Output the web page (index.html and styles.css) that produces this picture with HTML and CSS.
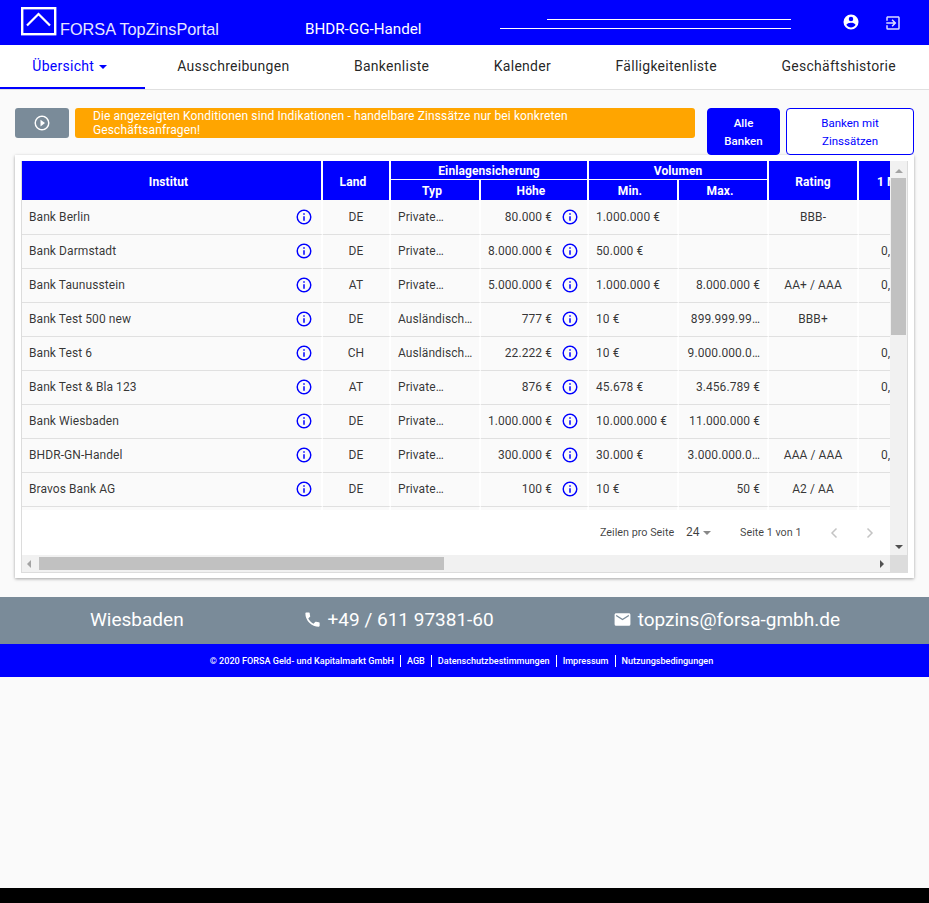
FILE: index.html
```html
<!DOCTYPE html>
<html lang="de">
<head>
<meta charset="utf-8">
<title>FORSA TopZinsPortal</title>
<link rel="stylesheet" href="styles.css">
</head>
<body>
<div class="app">
  <header class="topbar">
    <svg class="logo" width="36" height="29" viewBox="0 0 36 29"><rect x="1.2" y="1.2" width="33" height="26" fill="none" stroke="#fff" stroke-width="2.4"/><path d="M6 18.5 L17.5 7 L29 18.5" fill="none" stroke="#fff" stroke-width="2.2"/></svg>
    <span class="brand">FORSA TopZinsPortal</span>
    <span class="bank">BHDR-GG-Handel</span>
    <div class="fields"><i class="line short"></i><i class="line long"></i></div>
    <svg class="ico-user" width="18" height="18" viewBox="0 0 24 24"><path fill="#fff" d="M12,19.2C9.5,19.2 7.29,17.92 6,16C6.03,14 10,12.9 12,12.9C14,12.9 17.97,14 18,16C16.71,17.92 14.5,19.2 12,19.2M12,5A3,3 0 0,1 15,8A3,3 0 0,1 12,11A3,3 0 0,1 9,8A3,3 0 0,1 12,5M12,2A10,10 0 0,0 2,12A10,10 0 0,0 12,22A10,10 0 0,0 22,12C22,6.47 17.5,2 12,2Z"/></svg>
    <svg class="ico-exit" width="18" height="18" viewBox="0 0 24 24"><path fill="#dcdcff" d="M19,3H5C3.89,3 3,3.89 3,5V9H5V5H19V19H5V15H3V19A2,2 0 0,0 5,21H19A2,2 0 0,0 21,19V5C21,3.89 20.1,3 19,3M10.08,15.58L11.5,17L16.5,12L11.5,7L10.08,8.41L12.67,11H3V13H12.67L10.08,15.58Z"/></svg>
  </header>

  <nav class="tabs">
    <a class="tab active">Übersicht <b class="caret"></b></a>
    <a class="tab">Ausschreibungen</a>
    <a class="tab">Bankenliste</a>
    <a class="tab">Kalender</a>
    <a class="tab">Fälligkeitenliste</a>
    <a class="tab">Geschäftshistorie</a>
  </nav>

  <main class="content">
    <section class="toolbar">
      <button class="play"><svg width="18" height="18" viewBox="0 0 24 24"><path fill="#fff" d="M10,16.5L16,12L10,7.5V16.5M12,20C7.59,20 4,16.41 4,12C4,7.59 7.59,4 12,4C16.41,4 20,7.59 20,12C20,16.41 16.41,20 12,20M12,2A10,10 0 0,0 2,12A10,10 0 0,0 12,22A10,10 0 0,0 22,12A10,10 0 0,0 12,2Z"/></svg></button>
      <div class="notice">Die angezeigten Konditionen sind Indikationen - handelbare Zinssätze nur bei konkreten Geschäftsanfragen!</div>
      <button class="btn solid">Alle<br>Banken</button>
      <button class="btn outline">Banken mit<br>Zinssätzen</button>
    </section>

    <section class="card">
      <div class="grid">
        <div class="viewport">
          <div class="clip">
            <table class="data">
              <colgroup><col class="c1"><col class="c2"><col class="c3"><col class="c4"><col class="c5"><col class="c6"><col class="c7"><col class="c8"></colgroup>
              <thead>
                <tr class="h1"><th rowspan="2" class="sort tall">Institut</th><th rowspan="2" class="sort tall">Land</th><th colspan="2" class="group">Einlagensicherung</th><th colspan="2" class="group">Volumen</th><th rowspan="2" class="tall">Rating</th><th rowspan="2" class="m1 tall">1 Monat</th></tr>
                <tr class="h2"><th class="sort">Typ</th><th class="sort">Höhe</th><th class="sort">Min.</th><th class="sort">Max.</th></tr>
              </thead>
              <tbody>
                <tr class="first"><td><div class="namecell"><span>Bank Berlin</span><svg class="info" viewBox="0 0 24 24"><use href="#i"/></svg></div></td><td class="ctr">DE</td><td>Private…</td><td><div class="amount"><span>80.000 €</span><svg class="info" viewBox="0 0 24 24"><use href="#i"/></svg></div></td><td>1.000.000 €</td><td class="rgt"></td><td class="ctr">BBB-</td><td class="m1"></td></tr>
                <tr><td><div class="namecell"><span>Bank Darmstadt</span><svg class="info" viewBox="0 0 24 24"><use href="#i"/></svg></div></td><td class="ctr">DE</td><td>Private…</td><td><div class="amount"><span>8.000.000 €</span><svg class="info" viewBox="0 0 24 24"><use href="#i"/></svg></div></td><td>50.000 €</td><td class="rgt"></td><td class="ctr"></td><td class="m1">0,50 %</td></tr>
                <tr><td><div class="namecell"><span>Bank Taunusstein</span><svg class="info" viewBox="0 0 24 24"><use href="#i"/></svg></div></td><td class="ctr">AT</td><td>Private…</td><td><div class="amount"><span>5.000.000 €</span><svg class="info" viewBox="0 0 24 24"><use href="#i"/></svg></div></td><td>1.000.000 €</td><td class="rgt">8.000.000 €</td><td class="ctr">AA+ / AAA</td><td class="m1">0,50 %</td></tr>
                <tr><td><div class="namecell"><span>Bank Test 500 new</span><svg class="info" viewBox="0 0 24 24"><use href="#i"/></svg></div></td><td class="ctr">DE</td><td>Ausländisch…</td><td><div class="amount"><span>777 €</span><svg class="info" viewBox="0 0 24 24"><use href="#i"/></svg></div></td><td>10 €</td><td class="rgt">899.999.99…</td><td class="ctr">BBB+</td><td class="m1"></td></tr>
                <tr><td><div class="namecell"><span>Bank Test 6</span><svg class="info" viewBox="0 0 24 24"><use href="#i"/></svg></div></td><td class="ctr">CH</td><td>Ausländisch…</td><td><div class="amount"><span>22.222 €</span><svg class="info" viewBox="0 0 24 24"><use href="#i"/></svg></div></td><td>10 €</td><td class="rgt">9.000.000.0…</td><td class="ctr"></td><td class="m1">0,50 %</td></tr>
                <tr><td><div class="namecell"><span>Bank Test &amp; Bla 123</span><svg class="info" viewBox="0 0 24 24"><use href="#i"/></svg></div></td><td class="ctr">AT</td><td>Private…</td><td><div class="amount"><span>876 €</span><svg class="info" viewBox="0 0 24 24"><use href="#i"/></svg></div></td><td>45.678 €</td><td class="rgt">3.456.789 €</td><td class="ctr"></td><td class="m1">0,50 %</td></tr>
                <tr><td><div class="namecell"><span>Bank Wiesbaden</span><svg class="info" viewBox="0 0 24 24"><use href="#i"/></svg></div></td><td class="ctr">DE</td><td>Private…</td><td><div class="amount"><span>1.000.000 €</span><svg class="info" viewBox="0 0 24 24"><use href="#i"/></svg></div></td><td>10.000.000 €</td><td class="rgt">11.000.000 €</td><td class="ctr"></td><td class="m1"></td></tr>
                <tr><td><div class="namecell"><span>BHDR-GN-Handel</span><svg class="info" viewBox="0 0 24 24"><use href="#i"/></svg></div></td><td class="ctr">DE</td><td>Private…</td><td><div class="amount"><span>300.000 €</span><svg class="info" viewBox="0 0 24 24"><use href="#i"/></svg></div></td><td>30.000 €</td><td class="rgt">3.000.000.0…</td><td class="ctr">AAA / AAA</td><td class="m1">0,50 %</td></tr>
                <tr><td><div class="namecell"><span>Bravos Bank AG</span><svg class="info" viewBox="0 0 24 24"><use href="#i"/></svg></div></td><td class="ctr">DE</td><td>Private…</td><td><div class="amount"><span>100 €</span><svg class="info" viewBox="0 0 24 24"><use href="#i"/></svg></div></td><td>10 €</td><td class="rgt">50 €</td><td class="ctr">A2 / AA</td><td class="m1"></td></tr>
                <tr><td></td><td></td><td></td><td></td><td></td><td></td><td></td><td class="m1"></td></tr>
              </tbody>
            </table>
          </div>
          <div class="pager">
            <span class="pg-label">Zeilen pro Seite</span>
            <span class="pg-num">24</span><b class="pg-caret"></b>
            <span class="pg-range">Seite 1 von 1</span>
            <svg class="chev" width="8" height="12" viewBox="0 0 8 12"><path d="M6.5 1.5 L2 6 L6.5 10.5" fill="none" stroke="#c4c4c4" stroke-width="1.5"/></svg>
            <svg class="chev next" width="8" height="12" viewBox="0 0 8 12"><path d="M1.5 1.5 L6 6 L1.5 10.5" fill="none" stroke="#c4c4c4" stroke-width="1.5"/></svg>
          </div>
        </div>
        <div class="vbar"><b class="arr up"></b><i class="vthumb"></i><b class="arr down"></b></div>
        <div class="hbar"><b class="arr left"></b><i class="hthumb"></i><b class="arr right"></b></div>
        <div class="corner"></div>
      </div>
    </section>
  </main>

  <section class="contact">
    <span>Wiesbaden</span>
    <span class="contact-item"><svg width="19" height="19" viewBox="0 0 24 24"><path fill="#fff" d="M6.62,10.79C8.06,13.62 10.38,15.94 13.21,17.38L15.41,15.18C15.69,14.9 16.08,14.82 16.43,14.93C17.55,15.3 18.75,15.5 20,15.5A1,1 0 0,1 21,16.5V20A1,1 0 0,1 20,21A17,17 0 0,1 3,4A1,1 0 0,1 4,3H7.5A1,1 0 0,1 8.5,4C8.5,5.25 8.7,6.45 9.07,7.57C9.18,7.92 9.1,8.31 8.82,8.59L6.62,10.79Z"/></svg>+49 / 611 97381-60</span>
    <span class="contact-item"><svg width="19" height="19" viewBox="0 0 24 24"><path fill="#fff" d="M20,8L12,13L4,8V6L12,11L20,6M20,4H4C2.89,4 2,4.89 2,6V18A2,2 0 0,0 4,20H20A2,2 0 0,0 22,18V6C22,4.89 21.1,4 20,4Z"/></svg>topzins@forsa-gmbh.de</span>
  </section>

  <footer class="legal">
    <span>© 2020 FORSA Geld- und Kapitalmarkt GmbH</span><span>AGB</span><span>Datenschutzbestimmungen</span><span>Impressum</span><span>Nutzungsbedingungen</span>
  </footer>

  <div class="spacer"></div>
  <div class="blackbar"></div>
</div>
<svg class="defs" width="0" height="0"><defs><path id="i" fill="#0000ff" d="M11,9H13V7H11M12,20C7.59,20 4,16.41 4,12C4,7.59 7.59,4 12,4C16.41,4 20,7.59 20,12C20,16.41 16.41,20 12,20M12,2A10,10 0 0,0 2,12A10,10 0 0,0 12,22A10,10 0 0,0 22,12A10,10 0 0,0 12,2M11,17H13V11H11V17Z"/></defs></svg>
</body>
</html>
```

FILE: styles.css
```css
* { box-sizing: border-box; }
html, body { margin: 0; height: 100%; overflow: hidden; }
body { background: #fafafa; font-family: Roboto, "Liberation Sans", sans-serif; color: rgba(0,0,0,.87); }
.defs { display: block; height: 0; }
.app { display: flex; flex-direction: column; height: 100vh; }

.topbar { height: 45px; background: #0000ff; color: #fff; display: flex; align-items: flex-start; flex: none; }
.logo { margin: 7px 0 0 21px; flex: none; }
.brand { font-family: "Liberation Sans", Arial, sans-serif; font-size: 16.3px; line-height: 20px; margin: 19px 0 0 3px; width: 245px; flex: none; color: #e6e6ff; }
.bank { font-family: Roboto, sans-serif; font-size: 15.2px; line-height: 20px; margin: 19px 0 0 0; width: 195px; flex: none; }
.fields { width: 291px; margin-top: 19px; display: flex; flex-direction: column; align-items: flex-end; flex: none; }
.line { display: block; height: 1px; background: #fff; }
.line.short { width: 244px; margin-bottom: 8px; }
.line.long { width: 291px; }
.ico-user { margin: 13px 0 0 51px; flex: none; }
.ico-exit { margin: 14px 0 0 24px; flex: none; }

.tabs { height: 45px; background: #fff; border-bottom: 1px solid #e0e0e0; display: flex; flex: none; }
.tab { height: 44px; padding: 0 32.3px 2px; display: flex; align-items: center; flex: none; font-size: 14px; font-weight: 400; letter-spacing: .27px; color: rgba(0,0,0,.87); white-space: nowrap; }
.tab.active { color: #0000ff; width: 145px; border-bottom: 2px solid #0000ff; padding-bottom: 0; }
.caret { display: inline-block; margin-left: 5px; margin-top: 1px; border-left: 4.5px solid transparent; border-right: 4.5px solid transparent; border-top: 4.5px solid #0000ff; }

.content { padding: 18px 15px 0; flex: none; }
.toolbar { display: flex; align-items: flex-start; height: 47px; }
.play { width: 54px; height: 30px; background: #7a8b99; border: 0; border-radius: 3px; padding: 0; display: flex; align-items: center; justify-content: center; flex: none; }
.notice { width: 620px; height: 30px; margin-left: 6px; background: #ffa500; color: #fff; border-radius: 3px; font-size: 12px; line-height: 14px; padding: 1px 60px 1px 18px; letter-spacing: .12px; flex: none; }
.btn { height: 47px; border-radius: 4px; font: 500 11.5px/18px Roboto, sans-serif; padding: 0; flex: none; }
.btn.solid { width: 73px; margin-left: 12px; background: #0000ff; border: 1px solid #0000ff; color: #fff; }
.btn.outline { width: 128px; margin-left: 6px; background: #fff; border: 1px solid #0000ff; color: #0000ff; font-weight: 400; }

.card { height: 423px; background: #fff; padding: 6px 6px 0 6px; width: 899px; box-shadow: 0 1px 3px rgba(0,0,0,.35); }
.grid { display: grid; grid-template-columns: 868px 17px; grid-template-rows: 394px 17px; width: 887px; height: 412px; border: 1px solid #dcdcdc; border-top: 0; }

.viewport { background: #fff; display: flex; flex-direction: column; min-width: 0; }
.clip { height: 349px; overflow: hidden; flex: none; }
.data { width: 921px; table-layout: fixed; border-collapse: separate; border-spacing: 0; font-size: 12px; letter-spacing: .08px; }
.c1 { width: 301px; } .c2 { width: 68px; } .c3 { width: 90px; } .c4 { width: 108px; }
.c5, .c6, .c7, .c8 { width: 90px; }
.data th { background: #0000ff; color: #fff; font-weight: 700; font-size: 12px; letter-spacing: .1px; padding: 1px 0 0; border-right: 2px solid #fff; text-align: center; }
.data th.tall { padding-top: 2px; }
.data th.sort { padding-right: 6px; }
.h1 { height: 19px; }
.h2 { height: 20px; }
.group { border-bottom: 1px solid #fff; }
.data td { height: 34px; padding: 0 7px 1px; background: #fafafa; border-right: 2px solid #fff; border-bottom: 1px solid #e0e0e0; white-space: nowrap; overflow: hidden; color: rgba(0,0,0,.8); }
.data .first td { height: 35px; }
.data td.ctr { text-align: center; }
.data td.rgt { text-align: right; }
.data td.m1 { padding-left: 22px; }
.data th.m1 { text-align: left; padding-left: 18px; }
.namecell, .amount { display: flex; align-items: center; justify-content: space-between; margin-right: 1px; }
.amount { justify-content: flex-end; gap: 9px; }
.info { width: 18px; height: 18px; flex: none; }

.pager { height: 45px; display: flex; align-items: center; font-size: 10.8px; color: rgba(0,0,0,.75); background: #fff; padding-left: 578px; }
.pg-label { width: 86px; flex: none; }
.pg-num { font-size: 12px; width: 17px; flex: none; margin-top: -2px; }
.pg-caret { border-left: 4px solid transparent; border-right: 4px solid transparent; border-top: 4px solid #888; margin-right: 29px; flex: none; }
.pg-range { width: 90px; flex: none; }
.chev { flex: none; }
.chev.next { margin-left: 28px; }

.vbar { background: #f1f1f1; display: flex; flex-direction: column; align-items: center; }
.vthumb { width: 15px; height: 157px; background: #c1c1c1; flex: none; margin-top: 5px; }
.hbar { background: #f1f1f1; display: flex; align-items: center; }
.hthumb { width: 405px; height: 13px; background: #c1c1c1; flex: none; margin-left: 8px; }
.corner { background: #dcdcdc; }
.arr { width: 0; height: 0; border: 4px solid transparent; flex: none; }
.arr.up { border-bottom-color: #a3a3a3; border-top-width: 0; margin-top: 8px; }
.arr.down { border-top-color: #505050; border-bottom-width: 0; margin-top: auto; margin-bottom: 6px; }
.arr.left { border-right-color: #a3a3a3; border-left-width: 0; margin-left: 5px; }
.arr.right { border-left-color: #505050; border-right-width: 0; margin-left: auto; margin-right: 6px; }

.contact { height: 47px; margin-top: 19px; padding: 0 89px 2px 90px; background: #7a8b99; color: #fff; display: flex; align-items: center; justify-content: space-between; font-size: 19px; flex: none; }
.contact-item { display: flex; align-items: center; gap: 6px; }
.legal { height: 33px; background: #0000ff; color: #fff; display: flex; align-items: center; justify-content: center; font-size: 9.08px; font-weight: 500; padding: 0 32px 0 26px; flex: none; }
.legal span { padding: 0 6px; border-left: 1px solid #fff; line-height: 12px; }
.legal span:first-child { border-left: 0; }
.spacer { flex: 1; }
.blackbar { height: 15px; background: #000; flex: none; }
```
